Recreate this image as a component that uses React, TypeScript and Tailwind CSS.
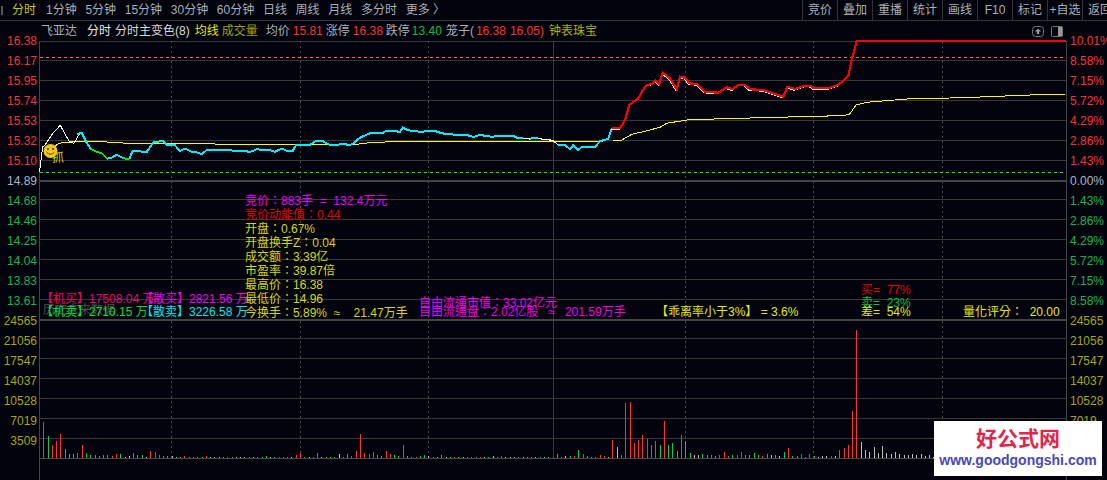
const NAV = ["1分钟", "5分钟", "15分钟", "30分钟", "60分钟", "日线", "周线", "月线", "多分时", "更多 〉"];
const TOOLS = ["竞价", "叠加", "重播", "统计", "画线", "F10", "标记", "+自选", "返回"];

const LEFT_LABELS = [
  ["16.38", "text-[#ff3232]"], ["16.17", "text-[#ff3232]"], ["15.95", "text-[#ff3232]"], ["15.74", "text-[#ff3232]"],
  ["15.53", "text-[#ff3232]"], ["15.32", "text-[#ff3232]"], ["15.10", "text-[#ff3232]"], ["14.89", "text-[#a8b8c8]"],
  ["14.68", "text-[#10b850]"], ["14.46", "text-[#10b850]"], ["14.25", "text-[#10b850]"], ["14.04", "text-[#10b850]"],
  ["13.83", "text-[#10b850]"], ["13.61", "text-[#10b850]"], ["24565", "text-[#a8a800]"], ["21056", "text-[#a8a800]"],
  ["17547", "text-[#a8a800]"], ["14037", "text-[#a8a800]"], ["10528", "text-[#a8a800]"], ["7019", "text-[#a8a800]"],
  ["3509", "text-[#a8a800]"],
];
const RIGHT_LABELS = [
  ["10.01%", "text-[#ff3232]"], ["8.58%", "text-[#ff3232]"], ["7.15%", "text-[#ff3232]"], ["5.72%", "text-[#ff3232]"],
  ["4.29%", "text-[#ff3232]"], ["2.86%", "text-[#ff3232]"], ["1.43%", "text-[#ff3232]"], ["0.00%", "text-[#a8b8c8]"],
  ["1.43%", "text-[#10b850]"], ["2.86%", "text-[#10b850]"], ["4.29%", "text-[#10b850]"], ["5.72%", "text-[#10b850]"],
  ["7.15%", "text-[#10b850]"], ["8.58%", "text-[#10b850]"], ["24565", "text-[#a8a800]"], ["21056", "text-[#a8a800]"],
  ["17547", "text-[#a8a800]"], ["14037", "text-[#a8a800]"], ["10528", "text-[#a8a800]"], ["7019", "text-[#a8a800]"],
  ["3509", "text-[#a8a800]"],
];

const GRID = [60, 80, 100, 120, 140, 160, 199, 219, 239, 259, 279, 299, 338, 358, 378, 398, 418, 438];
const DOTTED = [171, 300, 428, 685, 813, 942];

const WHITE_START = "39.5,172 42.7,147 45,145 53,133 60.3,125.3 69.3,141.7 74,143.3 79.3,134";
const CYAN: string[] = [
  "77,134 81.7,132.7 86,141.7 90.7,149",
  "107.3,158.7 111.7,157.7 116.7,154.7 123.3,158.3",
  "129.3,159 132.7,150.7 146.7,152 153.3,142.3 163.3,141 166.7,145.3 175,145.3 180,151 185,148.7 191.7,151.7 196.7,152.3 201.7,154.3 206.7,150 218.3,150 245,151 250,152 256.7,149.3 270,150.3 275,151.7 281.7,148.7 286.7,150.7 292.7,151 296,145 310,145 316,140.7 321.7,140.7 330,145 338,145 341,143.7 350,145 353.3,143.3 360,137.7 370,133.3 376.7,132.7 383,132.7 386.7,130.7 400,131.7 402.7,127.7 408.3,130.3 420,131.7 435,131 440,132.7 446.7,134.3 466.7,135 473.3,137 480,135 491.7,136.7 501.7,135.7 513.3,135.7 516.7,137.7 523.3,138.3",
  "530,139 533.3,137.7 538,138.5",
  "558,145 565,145 570,149.3 573.3,145 578.3,150 581.7,147 595,147.3 600,141 608.3,139 611.7,128.5",
];
const GREEN: string[] = ["90.7,149 96.7,151.7 101.7,153.3 107.3,158.7", "123.3,158.3 129.3,159"];
const WHITE_MID = ["523.3,138.3 530,139", "538,138.5 546.7,139.7 553,140.3 558,145"];
const RED_RISE =
  "611.7,128.3 620,128.3 625,120 629.3,105 638.3,98.3 643.3,89.3 646.7,85 651.7,84 655.7,80.7 659.3,84 662.7,72.7 670,78.3 676.7,89.3 680,76.7 685,77.7 689.3,83.3 697.3,84 705,91.7 718.3,92.7 726.7,87.3 732.7,89.3 738.3,84.7 745,84.7 750,89.3 763.3,90 773.3,93.3 783.3,96.7 787.3,86.7 795,89 805,85.7 810,85.7 814,88.3 828.3,88.3 838.3,85 848.3,76 851.7,60 856.7,41";
const AVG =
  "53.3,148.3 57.3,144.3 63.3,142.3 86.7,141.3 106.7,142 128.3,143.3 166.7,143.3 235,144.3 356.7,144.3 370,142.7 400,141.3 613,141 621.7,140 631.7,134.3 643.3,131.7 660,127.3 666.7,123.3 686.7,120 723,118.7 800,116.7 840,115.7 849.3,114.7 856,105 866.7,102.3 906.7,99 963,97.7 1030,95 1066,94";

const VOLUME =
  "r36 g22 r13 r17 r24 g9 g4 g4 r5 r13 g5 g3 g3 g2 g3 g3 r2 r4 g4 w1 w2 r5 g3 g3 w1 r7 r6 r3 g2 g2 w2 w1 g1 r2 g1 g1 r1 g1 r2 w1 w1 w1 g1 r1 g1 w1 w1 w1 g1 w1 r1 g1 g2 w1 g1 r1 r1 g1 w1 r3 r5 g1 w1 r1 r5 w1 g1 g1 g1 w4 r1 g4 r2 r7 r24 r5 r4 r6 g3 g2 r7 r4 g3 g2 " +
  "r13 g2 g1 r1 g2 g3 w2 r1 w1 g3 w1 g1 r1 g1 w1 r1 g1 g1 r1 w1 g1 w2 g1 r2 w1 w1 w1 g1 w1 g1 r1 w1 g1 w1 g1 r1 g4 g1 w2 g2 r2 g8 r4 g2 " +
  "g1 g1 r3 r2 w1 r18 w11 r3 r55 r56 r15 r18 r23 r19 r13 r17 g13 r37 g13 g15 g7 r23 g17 g5 w3 w3 g4 g3 r3 g2 r3 r6 r2 g3 r3 r6 g3 g3 g5 g3 r2 g4 w3 g3 w2 g6 r10 g2 g2 r4 r1 r4 g2 w1 w2 w2 r2 w2 r8 r10 r13 r47 r128 w16 w8 w6 w11 w5 w12 w5 w4 w6 w4 w3 w3 w4 w3 w4 w2 w3 w1";
const VOL_COLOR: Record<string, string> = { r: "#ff3232", g: "#00d050", w: "#c0c0c0" };

function Chart() {
  const bars = VOLUME.split(" ");
  return (
    <svg viewBox="39 41 1028 439" className="block h-[439px] w-[1028px] overflow-visible">
      <g stroke="#383838" shapeRendering="crispEdges">
        {GRID.map((y) => (
          <line key={y} x1="39" x2="1067" y1={y + 0.5} y2={y + 0.5} />
        ))}
        <line x1="39" x2="1067" y1="41.5" y2="41.5" />
        {DOTTED.map((x) => (
          <line key={x} x1={x + 0.5} x2={x + 0.5} y1="41" y2="458" strokeDasharray="2 3" stroke="#4a4a4a" />
        ))}
        <line x1="553.5" x2="553.5" y1="41" y2="458" />
        <line x1="39.5" x2="39.5" y1="41" y2="480" stroke="#444444" />
        <line x1="1066.5" x2="1066.5" y1="41" y2="480" stroke="#444444" />
        <line x1="39" x2="1067" y1="458.5" y2="458.5" stroke="#4a4a4a" />
      </g>
      <rect x="39" y="180" width="1028" height="2" fill="#444444" />
      <rect x="39" y="319" width="1028" height="2" fill="#444444" />

      <line x1="40" x2="1066" y1="57" y2="57" stroke="#ff6464" strokeDasharray="3 3" shapeRendering="crispEdges" />
      <line x1="40" x2="1066" y1="172.5" y2="172.5" stroke="#22ee22" strokeDasharray="3 3" shapeRendering="crispEdges" />

      <g fill="none" shapeRendering="crispEdges">
        <polyline points={AVG} stroke="#ffff00" strokeWidth="1" />
        <polyline points={WHITE_START} stroke="#ffffff" strokeWidth="1" />
        {WHITE_MID.map((p) => (
          <polyline key={p} points={p} stroke="#ffffff" strokeWidth="1.2" />
        ))}
        {CYAN.map((p) => (
          <polyline key={p} points={p} stroke="#00eeff" strokeWidth="2" />
        ))}
        {GREEN.map((p) => (
          <polyline key={p} points={p} stroke="#00ee00" strokeWidth="2" />
        ))}
        <polyline points={RED_RISE} stroke="#ffffff" strokeWidth="1" transform="translate(-0.8 1.2)" />
        <polyline points={`${RED_RISE} 1066,41`} stroke="#ff0000" strokeWidth="2.2" />
      </g>

      {/* smiley */}
      <circle cx="50.5" cy="151" r="7" fill="#f4c422" />
      <circle cx="48" cy="149" r="0.9" fill="#3a2a00" />
      <circle cx="53" cy="149" r="0.9" fill="#3a2a00" />
      <path d="M46.5 152 Q50.5 156.5 54.5 152" fill="none" stroke="#3a2a00" strokeWidth="0.8" />

      <g shapeRendering="crispEdges">
        {bars.map((b, i) => {
          const h = Number(b.slice(1));
          return <rect key={i} x={Math.floor(43.75 + 4.28 * i)} y={458 - h} width="1" height={h} fill={VOL_COLOR[b[0]]} />;
        })}
      </g>
    </svg>
  );
}

export default function App() {
  return (
    <div className="relative h-[480px] w-[1107px] overflow-hidden bg-[#02030d] font-['Liberation_Sans','Noto_Sans_CJK_SC',sans-serif] text-[12px] leading-[14px] text-[#a8b0b8]">
      {/* top bar */}
      <div className="flex h-[21px] items-center border-b border-[#333333]">
        <div className="flex w-[802px] shrink-0 items-center">
          <div className="ml-[1px] h-[9px] w-[2px] bg-[#555555]" />
          <span className="ml-[9px] text-[#c8c800]">分时</span>
          <div className="ml-[10px] flex gap-[8.7px]">
            {NAV.map((n) => (
              <span key={n} className="whitespace-nowrap">{n}</span>
            ))}
          </div>
        </div>
        <div className="flex h-[20px] shrink-0">
          {TOOLS.map((t) => (
            <div key={t} className="flex h-full w-[35px] shrink-0 items-center justify-center whitespace-nowrap border-l border-[#333333]">
              {t}
            </div>
          ))}
        </div>
      </div>

      {/* stock header */}
      <div className="flex h-[20px] items-center whitespace-pre pl-[41px]">
        <span>飞亚达</span>
        <span className="ml-[10px] text-[#e8e8e8]">分时</span>
        <span className="ml-[4px] text-[#d8d8d8]">分时主变色(8)</span>
        <span className="ml-[5px] text-[#e8e800]">均线</span>
        <span className="ml-[3px] text-[#a0a000]">成交量</span>
        <span className="ml-[8px]">均价</span>
        <span className="ml-[3px] text-[#ff3232]">15.81</span>
        <span className="ml-[3px]">涨停</span>
        <span className="ml-[3px] text-[#ff3232]">16.38</span>
        <span className="ml-[3px]">跌停</span>
        <span className="ml-[2px] text-[#00c040]">13.40</span>
        <span className="ml-[4px]">笼子(</span>
        <span className="ml-[2px] text-[#ff3232]">16.38</span>
        <span className="ml-[4px] text-[#ff3232]">16.05)</span>
        <span className="ml-[5px] text-[#b0b000]">钟表珠宝</span>
        <div className="ml-auto mr-[44px] flex items-center gap-[7px]">
          <svg viewBox="0 0 12 11" className="h-[11px] w-[12px]">
            <rect x="0.5" y="0.5" width="11" height="10" rx="3" fill="none" stroke="#777777" />
            <path d="M6 2.5 L9 5.5 H7.2 V8 H4.8 V5.5 H3 Z" fill="#999999" />
          </svg>
          <svg viewBox="0 0 12 11" className="h-[11px] w-[12px]">
            <rect x="0.5" y="0.5" width="11" height="10" rx="1" fill="none" stroke="#777777" />
            <rect x="7" y="1" width="4" height="9" fill="#999999" />
          </svg>
        </div>
      </div>

      {/* price and volume panes */}
      <div className="flex">
        <div className="-mt-[10px] flex w-[39px] shrink-0 flex-col">
          {LEFT_LABELS.map(([t, c]) => (
            <div key={t} className={`flex h-[20px] items-center justify-end pr-[2px] ${c}`}>{t}</div>
          ))}
        </div>
        <Chart />
        <div className="-mt-[10px] flex w-[40px] shrink-0 flex-col">
          {RIGHT_LABELS.map(([t, c], i) => (
            <div key={i} className={`flex h-[20px] items-center whitespace-nowrap pl-[3px] ${c}`}>{t}</div>
          ))}
        </div>
      </div>

      {/* indicator text */}
      <span className="absolute left-[52px] top-[151px] text-[#d8c800]">抓</span>

      <div className="absolute left-[245px] top-[194px] flex flex-col whitespace-pre font-['Liberation_Sans','Noto_Sans_CJK_TC',sans-serif] text-[#d8d800]">
        <span className="text-[#f000f0]">竞价：883手  =  132.4万元</span>
        <span className="text-[#e80000]">竞价动能值：0.44</span>
        <span>开盘：0.67%</span>
        <span>开盘换手Z：0.04</span>
        <span>成交额：3.39亿</span>
        <span>市盈率：39.87倍</span>
        <span>最高价：16.38</span>
        <span>最低价：14.96</span>
        <span>今换手：5.89%  ≈    21.47万手</span>
      </div>

      <span className="absolute left-[43px] top-[303px] text-[#505050]">历史未来数据</span>
      <div className="absolute left-[41px] top-[292px] flex whitespace-pre text-[#f00070]">
        <span className="w-[100px]">【机买】17508.04 万</span>
        <span className="text-[#f000f0]">【散买】2821.56 万</span>
      </div>
      <div className="absolute left-[41px] top-[305px] flex whitespace-pre text-[#00e030]">
        <span className="w-[100px]">【机卖】2710.15 万</span>
        <span className="text-[#00e8f0]">【散卖】3226.58 万</span>
      </div>

      <span className="absolute left-[419px] top-[296px] whitespace-pre font-['Liberation_Sans','Noto_Sans_CJK_TC',sans-serif] text-[#f000f0]">自由流通市值：33.02亿元</span>
      <span className="absolute left-[419px] top-[305px] whitespace-pre font-['Liberation_Sans','Noto_Sans_CJK_TC',sans-serif] text-[#f000f0]">自由流通盘：2.02亿股   ≈   201.59万手</span>
      <span className="absolute left-[656px] top-[305px] whitespace-pre text-[#e8e800]">【乖离率小于3%】 = 3.6%</span>
      <span className="absolute left-[861px] top-[283px] whitespace-pre text-[#e80000]">买=  77%</span>
      <span className="absolute left-[861px] top-[296px] whitespace-pre text-[#00c040]">卖=  23%</span>
      <span className="absolute left-[861px] top-[305px] whitespace-pre text-[#e8e800]">差=  54%</span>
      <span className="absolute left-[963px] top-[305px] whitespace-pre font-['Liberation_Sans','Noto_Sans_CJK_TC',sans-serif] text-[#e8e800]">量化评分：  20.00</span>

      {/* watermark */}
      <div className="absolute left-[934px] top-[421px] flex h-[55px] w-[168px] flex-col items-center bg-white">
        <span className="mt-[6px] text-[21px] font-bold leading-[24px] text-[#e2264a]">好公式网</span>
        <span className="mt-[1px] text-[14px] font-bold leading-[16px] text-[#4848c0]">www.goodgongshi.com</span>
      </div>
    </div>
  );
}
